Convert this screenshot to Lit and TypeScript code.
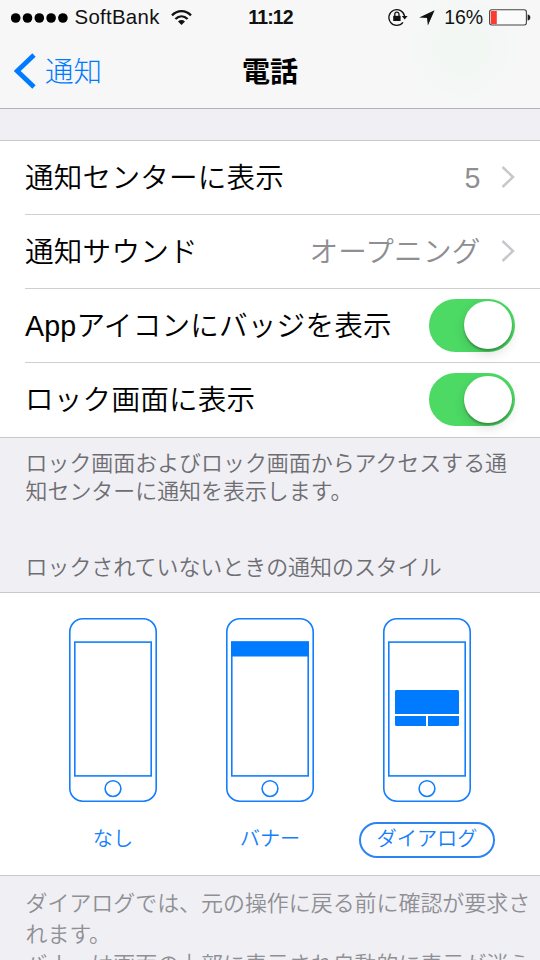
import { LitElement, html, css, svg, nothing } from "lit";
import { customElement, property } from "lit/decorators.js";

type AlertStyle = "none" | "banner" | "dialog";

@customElement("status-bar")
class StatusBar extends LitElement {
  static styles = css`
    :host {
      display: grid;
      grid-template-columns: 1fr auto 1fr;
      align-items: center;
      height: 35px;
      padding: 0 9px 0 11px;
      font: 20px/35px "Liberation Sans", Arial, sans-serif;
      color: #111;
    }
    .group { display: flex; align-items: center; }
    .right { justify-content: flex-end; }
    .dots { width: 57px; height: 10px; margin-right: 6.5px; }
    .carrier { font-size: 20.4px; letter-spacing: 0.3px; margin-right: 11px; }
    .wifi { width: 21px; height: 16px; }
    .time { font-weight: bold; font-size: 19.5px; letter-spacing: -0.9px; padding-right: 1px; }
    .lock { width: 20px; height: 19px; margin-right: 11px; }
    .arrow { width: 16px; height: 16px; margin-right: 9px; }
    .percent { font-size: 19.5px; letter-spacing: -0.1px; margin-right: 6px; }
    .battery { width: 42px; height: 17px; }
    svg { display: block; }
  `;
  render() {
    return html`
      <div class="group">
        <svg class="dots" viewBox="0 0 57 10">
          ${[4.7, 16.5, 28.3, 40.1, 51.9].map((x) => svg`<circle cx=${x} cy="5" r="4.8" fill="#000" />`)}
        </svg>
        <span class="carrier">SoftBank</span>
        <svg class="wifi" viewBox="0 0 21 16" fill="none" stroke="#111" stroke-width="2.3">
          <path d="M1 5.4C6.4 -.2 14.6 -.2 20 5.4" />
          <path d="M4.4 9C8.1 5.5 12.9 5.5 16.6 9" />
          <path d="M7 11.4Q10.5 8.8 14 11.4L10.5 15Z" fill="#111" stroke="none" />
        </svg>
      </div>
      <span class="time">11:12</span>
      <div class="group right">
        <svg class="lock" viewBox="0 0 20 19">
          <path d="M15 14.4A7.9 7.9 0 1 1 16.6 8.2" fill="none" stroke="#111" stroke-width="1.3" />
          <path d="M13.8 8H19.6L16.7 11.4Z" fill="#111" />
          <path d="M5.2 7.8H12.6V13H5.2Z" fill="#111" />
          <path d="M6.8 8.4V6.2A2.1 2.1 0 0 1 11 6.2V8.4" fill="none" stroke="#111" stroke-width="1.3" />
        </svg>
        <svg class="arrow" viewBox="0 0 16 16"><path d="M15.6 .3L8.9 15.6L8 8.1L.2 7.5Z" fill="#111" /></svg>
        <span class="percent">16%</span>
        <svg class="battery" viewBox="0 0 42 17">
          <rect x=".6" y=".8" width="36.8" height="15.2" rx="2.2" fill="#fbfbfb" stroke="#444" stroke-width="1.1" />
          <path d="M2.6 2H7.8V15H2.6Q1.8 15 1.8 14.2V2.8Q1.8 2 2.6 2Z" fill="#fb3b30" />
          <path d="M38.6 5.5Q41.3 5.8 41.3 8.5T38.6 11.5Z" fill="#222" />
        </svg>
      </div>
    `;
  }
}

@customElement("toggle-switch")
class ToggleSwitch extends LitElement {
  static styles = css`
    :host {
      display: flex;
      justify-content: flex-end;
      box-sizing: border-box;
      width: 86px;
      height: 53px;
      padding: 2.6px;
      border-radius: 27px;
      background: #4cd964;
    }
    .knob {
      width: 47.8px;
      height: 47.8px;
      border-radius: 50%;
      background: #fff;
      box-shadow: 0 2px 2px rgba(0, 0, 0, 0.28), 0 5px 12px rgba(0, 0, 0, 0.13);
    }
  `;
  render() {
    return html`<div class="knob"></div>`;
  }
}

@customElement("setting-row")
class SettingRow extends LitElement {
  @property() label = "";
  @property() value = "";
  @property({ type: Boolean }) toggle = false;
  static styles = css`
    :host {
      display: flex;
      align-items: center;
      box-sizing: border-box;
      height: 74px;
      margin-left: 25px;
      padding-right: 25.5px;
      border-bottom: 1px solid #cfced3;
      font-family: "Liberation Sans", "Noto Sans CJK JP", sans-serif;
    }
    :host(:last-of-type) { border-bottom: 0; }
    .label { flex: 1; color: #000; white-space: nowrap; letter-spacing: 0.2px; }
    .value { color: #8e8e93; margin-right: 20px; letter-spacing: 0.2px; }
    .chevron { display: block; width: 14px; height: 22px; margin-bottom: 1px; }
    toggle-switch { margin-bottom: 1px; }
  `;
  render() {
    return html`
      <span class="label">${this.label}</span>
      ${this.toggle
        ? html`<toggle-switch></toggle-switch>`
        : html`<span class="value">${this.value}</span>
            <svg class="chevron" viewBox="0 0 14 22">
              <path d="M1.5 1L12 11L1.5 21" fill="none" stroke="#c7c7cc" stroke-width="2.5" />
            </svg>`}
    `;
  }
}

@customElement("style-option")
class StyleOption extends LitElement {
  @property() kind: AlertStyle = "none";
  @property() label = "";
  @property({ type: Boolean }) selected = false;
  static styles = css`
    :host { display: flex; flex-direction: column; align-items: center; width: 157px; }
    .phone { display: block; width: 88px; height: 184px; }
    .label {
      box-sizing: border-box;
      height: 36px;
      margin-top: 20px;
      padding: 0 16px;
      border: 2px solid transparent;
      border-radius: 18px;
      color: #147efb;
      font-size: 20.2px;
      line-height: 28px;
      white-space: nowrap;
    }
    .label.selected { border-color: #2c84f2; }
  `;
  render() {
    return html`
      <svg class="phone" viewBox="0 0 88 184" fill="none" stroke="#147efb" stroke-width="1.6">
        <rect x=".8" y=".8" width="86.4" height="182.4" rx="13" />
        <rect x="5.8" y="24.1" width="76.4" height="133.8" />
        <circle cx="44" cy="170.6" r="7.9" />
        ${this.kind === "banner"
          ? svg`<path d="M5 23.5H83V38.5H5Z" fill="#007aff" stroke="none" />`
          : nothing}
        ${this.kind === "dialog"
          ? svg`<g fill="#007aff" stroke="none">
              <path d="M12 96V73.5Q12 72 13.5 72H74.5Q76 72 76 73.5V96Z" />
              <path d="M12 98H43V108H13.5Q12 108 12 106.5Z" />
              <path d="M45 98H76V106.5Q76 108 74.5 108H45Z" />
            </g>`
          : nothing}
      </svg>
      <span class="label ${this.selected ? "selected" : ""}">${this.label}</span>
    `;
  }
}

@customElement("app-root")
class AppRoot extends LitElement {
  static styles = css`
    :host {
      display: flex;
      flex-direction: column;
      height: 960px;
      overflow: hidden;
      background: #efeff4;
      font-family: "Noto Sans CJK JP", sans-serif;
      font-weight: 350;
      font-size: 28.6px;
      line-height: 40px;
    }
    :host > * { flex-shrink: 0; }
    .top {
      box-sizing: border-box;
      height: 109px;
      border-bottom: 1px solid #b2b2b5;
      background: radial-gradient(circle at 462px 48px, #f0f7f1 0, #f7f7f8 60px);
    }
    .nav {
      display: grid;
      grid-template-columns: 1fr auto 1fr;
      align-items: center;
      height: 71px;
      padding: 0 14px;
    }
    .back { display: flex; align-items: center; gap: 8px; color: #007aff; }
    .back svg { display: block; width: 23px; height: 36px; }
    .back span, .title { padding-bottom: 2px; }
    .back span { font-weight: 300; }
    .title { font-size: 28px; font-weight: 700; color: #000; }
    .card {
      box-sizing: border-box;
      background: #fff;
      border-top: 1px solid #c8c7cc;
      border-bottom: 1px solid #c8c7cc;
    }
    .rows { height: 298px; margin-top: 31px; }
    .note {
      padding-left: 25.5px;
      font-size: 21.95px;
      line-height: 27.5px;
      color: #6d6d72;
      white-space: nowrap;
    }
    .lock-note { margin-top: 10px; height: 104px; }
    .heading { height: 40px; }
    .styles { display: flex; justify-content: center; height: 284px; padding: 25px 0 0; }
    .faded { margin-top: 11px; color: #8f8f94; line-height: 30.5px; }
  `;
  render() {
    return html`
      <header class="top">
        <status-bar></status-bar>
        <div class="nav">
          <div class="back">
            <svg viewBox="0 0 23 36"><path d="M20 2L3.2 18L20 34" fill="none" stroke="#007aff" stroke-width="4.8" /></svg>
            <span>通知</span>
          </div>
          <span class="title">電話</span>
        </div>
      </header>
      <section class="card rows">
        <setting-row label="通知センターに表示" value="5"></setting-row>
        <setting-row label="通知サウンド" value="オープニング"></setting-row>
        <setting-row label="Appアイコンにバッジを表示" toggle></setting-row>
        <setting-row label="ロック画面に表示" toggle></setting-row>
      </section>
      <div class="note lock-note">ロック画面およびロック画面からアクセスする通<br />知センターに通知を表示します。</div>
      <div class="note heading">ロックされていないときの通知のスタイル</div>
      <section class="card styles">
        <style-option kind="none" label="なし"></style-option>
        <style-option kind="banner" label="バナー"></style-option>
        <style-option kind="dialog" label="ダイアログ" selected></style-option>
      </section>
      <div class="note faded">ダイアログでは、元の操作に戻る前に確認が要求さ<br />れます。<br />バナーは画面の上部に表示され自動的に表示が消え</div>
    `;
  }
}
